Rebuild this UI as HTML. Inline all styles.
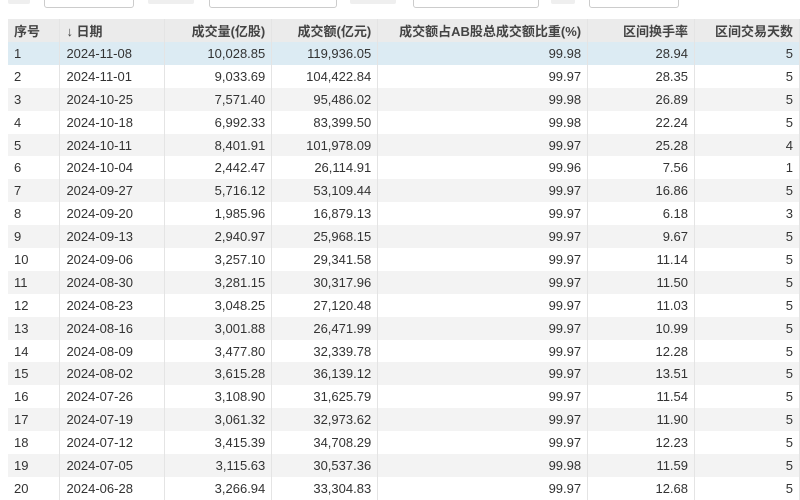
<!DOCTYPE html>
<html><head><meta charset="utf-8"><style>
body{margin:0;width:800px;height:500px;overflow:hidden;background:#fff;font-family:"Liberation Sans","Noto Sans CJK SC",sans-serif;color:#333;position:relative}
.box{position:absolute;top:-4px;height:10px;border:1px solid #ccc;border-radius:3px;background:#fff}
.lbl{position:absolute;top:-4px;height:8px;background:#efefef;border-radius:2px}
table{position:absolute;left:8px;top:19px;border-collapse:collapse;font-size:13px;table-layout:fixed}
td,th{height:22.9px;padding:0 6px;white-space:nowrap;border-right:1px solid #e4e4e4;box-sizing:border-box}
th{background:#ebebeb;font-weight:bold;color:#444;text-align:right;height:23px}
td{text-align:right}
.l{text-align:left}
tr:nth-child(even) td{background:#f3f3f3}
tr.h td{background:#dcebf3}
</style></head><body>
<div class="lbl" style="left:8px;width:22px"></div>
<div class="box" style="left:44px;width:88px"></div>
<div class="lbl" style="left:148px;width:46px"></div>
<div class="box" style="left:209px;width:126px"></div>
<div class="lbl" style="left:350px;width:46px"></div>
<div class="box" style="left:413px;width:124px"></div>
<div class="lbl" style="left:551px;width:24px"></div>
<div class="box" style="left:589px;width:88px"></div>
<table>
<colgroup><col style="width:52px"><col style="width:105px"><col style="width:107px"><col style="width:106px"><col style="width:210px"><col style="width:107px"><col style="width:105px"></colgroup>
<tr><th class="l">序号</th><th class="l">↓ 日期</th><th>成交量(亿股)</th><th>成交额(亿元)</th><th>成交额占AB股总成交额比重(%)</th><th>区间换手率</th><th>区间交易天数</th></tr>
<tr class="h"><td class="l">1</td><td class="l">2024-11-08</td><td>10,028.85</td><td>119,936.05</td><td>99.98</td><td>28.94</td><td>5</td></tr>
<tr><td class="l">2</td><td class="l">2024-11-01</td><td>9,033.69</td><td>104,422.84</td><td>99.97</td><td>28.35</td><td>5</td></tr>
<tr><td class="l">3</td><td class="l">2024-10-25</td><td>7,571.40</td><td>95,486.02</td><td>99.98</td><td>26.89</td><td>5</td></tr>
<tr><td class="l">4</td><td class="l">2024-10-18</td><td>6,992.33</td><td>83,399.50</td><td>99.98</td><td>22.24</td><td>5</td></tr>
<tr><td class="l">5</td><td class="l">2024-10-11</td><td>8,401.91</td><td>101,978.09</td><td>99.97</td><td>25.28</td><td>4</td></tr>
<tr><td class="l">6</td><td class="l">2024-10-04</td><td>2,442.47</td><td>26,114.91</td><td>99.96</td><td>7.56</td><td>1</td></tr>
<tr><td class="l">7</td><td class="l">2024-09-27</td><td>5,716.12</td><td>53,109.44</td><td>99.97</td><td>16.86</td><td>5</td></tr>
<tr><td class="l">8</td><td class="l">2024-09-20</td><td>1,985.96</td><td>16,879.13</td><td>99.97</td><td>6.18</td><td>3</td></tr>
<tr><td class="l">9</td><td class="l">2024-09-13</td><td>2,940.97</td><td>25,968.15</td><td>99.97</td><td>9.67</td><td>5</td></tr>
<tr><td class="l">10</td><td class="l">2024-09-06</td><td>3,257.10</td><td>29,341.58</td><td>99.97</td><td>11.14</td><td>5</td></tr>
<tr><td class="l">11</td><td class="l">2024-08-30</td><td>3,281.15</td><td>30,317.96</td><td>99.97</td><td>11.50</td><td>5</td></tr>
<tr><td class="l">12</td><td class="l">2024-08-23</td><td>3,048.25</td><td>27,120.48</td><td>99.97</td><td>11.03</td><td>5</td></tr>
<tr><td class="l">13</td><td class="l">2024-08-16</td><td>3,001.88</td><td>26,471.99</td><td>99.97</td><td>10.99</td><td>5</td></tr>
<tr><td class="l">14</td><td class="l">2024-08-09</td><td>3,477.80</td><td>32,339.78</td><td>99.97</td><td>12.28</td><td>5</td></tr>
<tr><td class="l">15</td><td class="l">2024-08-02</td><td>3,615.28</td><td>36,139.12</td><td>99.97</td><td>13.51</td><td>5</td></tr>
<tr><td class="l">16</td><td class="l">2024-07-26</td><td>3,108.90</td><td>31,625.79</td><td>99.97</td><td>11.54</td><td>5</td></tr>
<tr><td class="l">17</td><td class="l">2024-07-19</td><td>3,061.32</td><td>32,973.62</td><td>99.97</td><td>11.90</td><td>5</td></tr>
<tr><td class="l">18</td><td class="l">2024-07-12</td><td>3,415.39</td><td>34,708.29</td><td>99.97</td><td>12.23</td><td>5</td></tr>
<tr><td class="l">19</td><td class="l">2024-07-05</td><td>3,115.63</td><td>30,537.36</td><td>99.98</td><td>11.59</td><td>5</td></tr>
<tr><td class="l">20</td><td class="l">2024-06-28</td><td>3,266.94</td><td>33,304.83</td><td>99.97</td><td>12.68</td><td>5</td></tr>
</table>
</body></html>
